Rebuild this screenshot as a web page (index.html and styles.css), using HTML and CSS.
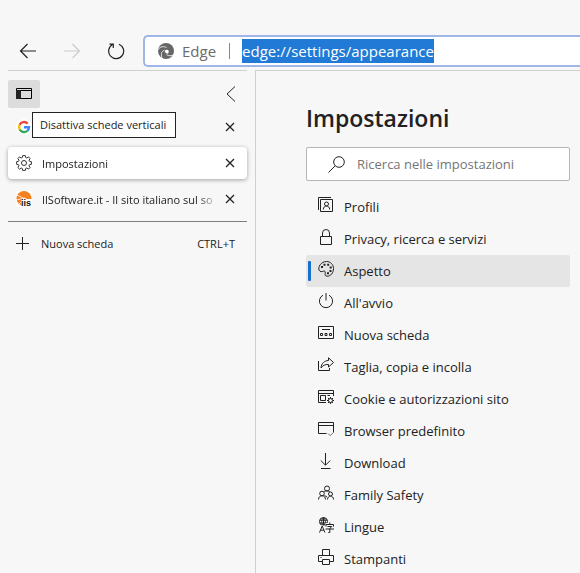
FILE: index.html
```
<!DOCTYPE html>
<html lang="it">
<head>
    <meta charset="utf-8">
    <title>Impostazioni</title>
    <link rel="stylesheet" href="styles.css">
</head>
<body>
    <header class="toolbar">
        <button class="nav-button" aria-label="Indietro">
            <svg viewBox="0 0 18 18"><path d="M17 9H1.500M8.500 2L1.500 9l7 7"/></svg>
        </button>
        <button class="nav-button disabled" aria-label="Avanti" disabled>
            <svg viewBox="0 0 18 18"><path d="M1 9h15.500M9.500 2l7 7-7 7"/></svg>
        </button>
        <button class="nav-button" aria-label="Aggiorna">
            <svg viewBox="0 0 18 18"><path d="M12 2.200a7.500 7.500 0 1 1-6.500.4M2.500 2.100h3.800v4"/></svg>
        </button>
        <div class="address-bar">
            <svg class="edge-logo" viewBox="0 0 16 16">
                <circle cx="8" cy="8" r="8"/>
                <path class="swirl" d="M0 7C2 3 6 3.200 8.500 4.500M4.500 16C2.500 12 3.200 8.500 6.500 7M16 11.500c-2.500 1.800-5.500 1.600-7.500.2"/>
                <path class="eye" d="M6.800 7.600C9 5.500 12 7.500 10.300 10c-1 1.600-3.700.2-3.500-2.400z"/>
            </svg>
            <label for="url">Edge</label>
            <span class="separator"></span>
            <input type="text" id="url" value="edge://settings/appearance" spellcheck="false">
        </div>
    </header>
    <div class="main">
        <aside class="sidebar">
            <div class="sidebar-top">
                <button class="toggle" aria-label="Disattiva schede verticali">
                    <svg viewBox="0 0 16 12"><path d="M.5.5h15v10H.5zM.5 2.500h15"/><path class="solid" d="M0 2h5v9H0z"/></svg>
                </button>
                <button class="collapse" aria-label="Comprimi riquadro">
                    <svg viewBox="0 0 10 16"><path d="M9 .5L1 8l8 7.500"/></svg>
                </button>
                <div class="tooltip" role="tooltip">Disattiva schede verticali</div>
            </div>
            <ul class="tabs">
                <li class="tab">
                    <svg class="favicon" viewBox="0 0 16 16">
                        <circle cx="8" cy="8" r="8" fill="#fff"/>
                        <g fill="none" stroke-width="2.400">
                            <path stroke="#ea4335" d="M3.600 5.700A5 5 0 0 1 11.600 4.600"/>
                            <path stroke="#fbbc05" d="M3.700 10.500a5 5 0 0 1-.1-4.800"/>
                            <path stroke="#34a853" d="M11.300 11.900a5 5 0 0 1-7.600-1.400"/>
                            <path stroke="#4285f4" d="M8 8.200h5a5 5 0 0 1-1.700 3.700"/>
                        </g>
                    </svg>
                    <span class="tab-title"></span>
                    <button class="close" aria-label="Chiudi scheda"><svg viewBox="0 0 10 10"><path d="M1 1l8 8M9 1L1 9"/></svg></button>
                </li>
                <li class="tab active">
                    <svg class="favicon line" viewBox="0 0 16 16">
                        <circle cx="8" cy="8" r="2.500"/>
                        <path d="M6.700.6h2.600l.4 1.900 1.100.5 1.700-1.100 1.600 1.700L13 5.200l.5 1.100 1.900.4v2.600l-1.900.4-.5 1.100 1.100 1.700-1.600 1.600-1.700-1.100-1.100.5-.4 1.900H6.700l-.4-1.900-1.100-.5-1.700 1.100-1.600-1.600L3 10.800l-.5-1.100-1.900-.4V6.700l1.900-.4L3 5.200 1.900 3.600l1.600-1.700L5.200 3l1.100-.5z"/>
                    </svg>
                    <span class="tab-title">Impostazioni</span>
                    <button class="close" aria-label="Chiudi scheda"><svg viewBox="0 0 10 10"><path d="M1 1l8 8M9 1L1 9"/></svg></button>
                </li>
                <li class="tab">
                    <svg class="favicon" viewBox="0 0 16 16">
                        <path fill="#fff" d="M0 0h16v16H0z"/>
                        <circle cx="8" cy="7.500" r="7.500" fill="#f5821f"/>
                        <path fill="#fff" d="M5.500 8L8 6.500 11 8h5v8H5z"/>
                        <path stroke="#fff" stroke-width=".8" fill="none" d="M1 4l6 3M0 9l6-1.500M2.500 13.500L7 9"/>
                        <text class="iis" x="5" y="15">iis</text>
                    </svg>
                    <span class="tab-title">IlSoftware.it - Il sito italiano sul so</span>
                    <button class="close" aria-label="Chiudi scheda"><svg viewBox="0 0 10 10"><path d="M1 1l8 8M9 1L1 9"/></svg></button>
                </li>
            </ul>
            <button class="new-tab">
                <svg viewBox="0 0 13 13"><path d="M6.500 0v13M0 6.500h13"/></svg>
                <span>Nuova scheda</span>
                <span class="shortcut">CTRL+T</span>
            </button>
        </aside>
        <main class="settings">
            <h1>Impostazioni</h1>
            <div class="search">
                <svg viewBox="0 0 17 17"><circle cx="11" cy="6" r="5.300"/><path d="M7.200 9.800L.5 16.500"/></svg>
                <input type="search" aria-label="Ricerca nelle impostazioni" placeholder="Ricerca nelle impostazioni">
            </div>
            <nav class="menu">
                <a href="#profili">
                    <svg viewBox="0 0 16 16"><path d="M2.500 2.500h12v12h-12zM.5 13V.5H13"/><circle cx="8.500" cy="7" r="2"/><path d="M5.300 12.500c0-4.600 6.400-4.600 6.400 0"/></svg>
                    Profili
                </a>
                <a href="#privacy">
                    <svg viewBox="0 0 16 16"><path d="M2.500 7.500h11v8h-11zM4.500 7.500V4a3.500 3.500 0 0 1 7 0v3.500"/></svg>
                    Privacy, ricerca e servizi
                </a>
                <a href="#aspetto" class="selected">
                    <svg viewBox="0 0 16 16"><path d="M8.500.5c4 0 7 3 7 7.200 0 4-2.800 7.500-6.200 7.500-2.300 0-2.500-1.500-2.100-3 .3-1.600-.4-2.600-1.700-2-1.600.8-3.500.6-4.400-1C-.3 6.200 3 .5 8.500.5z"/><path class="solid" d="M3 5h2v2H3zM5.500 2.700h2v2h-2zM9.200 2.800h2v2h-2zM11.700 5.500h2v2h-2zM11.500 9h2v2h-2zM9 11.300h2v2H9z"/></svg>
                    Aspetto
                </a>
                <a href="#avvio">
                    <svg viewBox="0 0 16 16"><path d="M5 2.200a6.600 6.600 0 1 0 6 0M8 0v7.500"/></svg>
                    All'avvio
                </a>
                <a href="#nuova-scheda">
                    <svg viewBox="0 0 16 16"><path d="M.5 1.500h15v12H.5zM4 4.500h8M2.500 8.500h2v2h-2zM7 8.500h2v2H7zM11.500 8.500h2v2h-2z"/></svg>
                    Nuova scheda
                </a>
                <a href="#taglia">
                    <svg viewBox="0 0 16 16"><path d="M.5 4v9.500h11V11M10.500.8l5 4.700-5 4.500V7.500C7 7.300 5 8.300 3 11c.5-4.800 3.300-7.200 7.500-7.500z"/></svg>
                    Taglia, copia e incolla
                </a>
                <a href="#cookie">
                    <svg viewBox="0 0 16 16"><path d="M8 13.500H.5v-12h15V7M.5 4.500h15M2.500 6.500h5v5h-5zM9.500 6.500H12"/><circle cx="12.500" cy="11.500" r="2"/><path d="M12.500 8v1.500M12.500 13.500V15M9 11.500h1.500M14.500 11.500H16M10 9l1.100 1.100M15 9l-1.100 1.100M10 14l1.100-1.100M15 14l-1.100-1.100"/></svg>
                    Cookie e autorizzazioni sito
                </a>
                <a href="#browser">
                    <svg viewBox="0 0 16 16"><path d="M8.500 12.500h-8v-11h15V11M.5 4.500h15"/><path stroke="#777" d="M10 12.500l2.200 2.200L16 11"/></svg>
                    Browser predefinito
                </a>
                <a href="#download">
                    <svg viewBox="0 0 16 16"><path d="M7.500 0v12M2.800 7.500l4.700 4.700 4.700-4.700M3 15.500h9.500"/></svg>
                    Download
                </a>
                <a href="#family">
                    <svg viewBox="0 0 16 16"><circle cx="9" cy="3.500" r="2.500"/><circle cx="4" cy="8.500" r="2.300"/><circle cx="12.500" cy="9" r="2"/><path d="M.5 14.500c0-5 7-5 7 0M9.500 14.500c0-4.500 6-4.500 6 0M5.700 7C6 6.300 7 6 8.500 6c1.800 0 2.800.3 3.500 1M6.500 10.500L9 12"/></svg>
                    Family Safety
                </a>
                <a href="#lingue">
                    <svg viewBox="0 0 16 16"><circle cx="5.500" cy="4.500" r="4"/><path d="M1.500 3.200h8M1.500 6h8M5.500.5v8M5.500.5c-2.500 2-2.500 6 0 8M5.500.5c2.500 2 2.500 6 0 8"/><path fill="#f7f7f7" stroke="none" d="M1 8.500h6.500v7H1zM7.500 6H16v10H7.500z"/><path d="M1.500 15.500l2.700-6.500 2.700 6.500M2.500 13.200h3.400M11.800 5.500v2M8 9.500v-2h7.500v2M9.500 9.500h4.300l-2 2v4h-1.500M7.500 12H16"/></svg>
                    Lingue
                </a>
                <a href="#stampanti">
                    <svg viewBox="0 0 16 16"><path d="M4.500 6.500v-6h7v6M4 12.500H.5v-6h15v6H12M4.500 10.500h7v5h-7zM2.500 8.500h1"/></svg>
                    Stampanti
                </a>
            </nav>
        </main>
    </div>
    <script src="script.js"></script>
</body>
</html>
```
FILE: styles.css
```
* {
    box-sizing: border-box;
}
html, body {
    height: 100%;
}
body {
    margin: 0;
    display: flex;
    flex-direction: column;
    overflow: hidden;
    background-color: #f7f7f7;
    color: #222;
    font-family: "Segoe UI", "Open Sans", sans-serif;
    font-size: 13px;
}
button {
    padding: 0;
    border: none;
    background: none;
    color: inherit;
    font: inherit;
}
svg {
    flex: none;
    fill: none;
    stroke: #222;
}
.solid {
    fill: #222;
    stroke: none;
}

/* toolbar */
.toolbar {
    display: flex;
    align-items: center;
    gap: 12px;
    padding: 35px 0 3px 12px;
}
.nav-button {
    width: 32px;
    height: 32px;
}
.nav-button svg {
    display: block;
    width: 18px;
    height: 18px;
    margin: auto;
    stroke-width: 1.2;
}
.nav-button.disabled svg {
    stroke: #ccc;
}
.address-bar {
    flex: 1;
    display: flex;
    align-items: center;
    height: 32px;
    margin-left: -1px;
    padding-left: 13px;
    border: 2px solid #a0b6e8;
    border-right: none;
    border-radius: 5px 0 0 5px;
    background-color: #fff;
    color: #6b6b6b;
    font-size: 15px;
}
.edge-logo {
    width: 16px;
    height: 16px;
    margin-right: 8px;
    fill: #666;
    stroke: none;
}
.swirl {
    fill: none;
    stroke: #fff;
    stroke-width: 0.8;
}
.eye {
    fill: #fff;
}
.separator {
    width: 1px;
    height: 16px;
    margin: 0 12px 0 13px;
    background-color: #888;
}
.address-bar input {
    flex: 1;
    min-width: 0;
    height: 24px;
    padding: 0;
    border: none;
    outline: none;
    background: none;
    color: #222;
    font: 15px/24px "Segoe UI", "Open Sans", sans-serif;
}
.address-bar input::selection {
    background-color: rgba(30, 120, 212, 0.99);
    color: #fff;
}

.main {
    flex: 1;
    display: flex;
    min-height: 0;
}

/* vertical tabs */
.sidebar {
    flex: none;
    width: 239px;
    margin: 0 8px;
    border-top: 1px solid #d0d0d0;
    font-size: 11px;
}
.sidebar-top {
    position: relative;
    display: flex;
    align-items: center;
    justify-content: space-between;
    padding: 9px 11px 3px 0;
}
.toggle {
    width: 32px;
    height: 28px;
    border-radius: 2px;
    background-color: #dcdcdc;
}
.toggle svg {
    display: block;
    width: 16px;
    height: 12px;
    margin: auto;
    stroke: #000;
}
.collapse svg {
    display: block;
    width: 10px;
    height: 16px;
}
.tooltip {
    position: absolute;
    top: 41px;
    left: 24px;
    padding: 0 9px 0 7px;
    border: 1px solid #222;
    background-color: #fff;
    line-height: 24px;
    white-space: nowrap;
}
.tabs {
    display: flex;
    flex-direction: column;
    gap: 4px;
    margin: 0;
    padding: 0 0 6px;
    border-bottom: 1px solid #808080;
    list-style: none;
}
.tab {
    display: flex;
    align-items: center;
    gap: 10px;
    height: 32px;
    padding: 0 12px 0 8px;
    border-radius: 4px;
}
.tab.active {
    background-color: #fff;
    box-shadow: 0 1px 4px rgba(0, 0, 0, 0.35);
}
.favicon {
    width: 16px;
    height: 16px;
    stroke: none;
}
.favicon.line {
    stroke: #333;
}
.iis {
    fill: #111;
    font: bold 9px "Liberation Sans", sans-serif;
}
.tab-title {
    flex: 1;
    margin-right: -4px;
    overflow: hidden;
    white-space: nowrap;
    mask-image: linear-gradient(to right, #000 88%, transparent);
}
.close svg {
    display: block;
    width: 10px;
    height: 10px;
    stroke-width: 1.3;
}
.new-tab {
    display: flex;
    align-items: center;
    gap: 12px;
    width: 100%;
    height: 42px;
    padding: 0 12px 0 8px;
}
.new-tab svg {
    width: 13px;
    height: 13px;
}
.shortcut {
    margin-left: auto;
}

/* settings */
.settings {
    flex: 1;
    min-width: 0;
    padding: 30px 10px 0 50px;
    border-top: 1px solid #d0d0d0;
    border-left: 1px solid #d0d0d0;
}
h1 {
    margin: 0 0 12px;
    font-size: 23px;
    font-weight: 600;
    line-height: 34px;
}
.search {
    display: flex;
    align-items: center;
    gap: 12px;
    height: 34px;
    margin-bottom: 10px;
    padding: 0 10px 0 21px;
    border: 1px solid #b5b5b5;
    border-radius: 2px;
    background-color: #fff;
}
.search svg {
    width: 17px;
    height: 17px;
}
.search input {
    flex: 1;
    min-width: 0;
    padding: 0;
    border: none;
    outline: none;
    background: none;
    font: inherit;
}
.search input::placeholder {
    color: #757575;
}
.menu a {
    position: relative;
    display: flex;
    align-items: center;
    gap: 10px;
    height: 32px;
    padding-left: 12px;
    border-radius: 2px;
    color: #222;
    text-decoration: none;
}
.menu svg {
    width: 16px;
    height: 16px;
    margin-bottom: 4px;
}
.menu .selected {
    background-color: #e5e5e5;
}
.menu .selected::before {
    content: "";
    position: absolute;
    top: 6px;
    left: 2px;
    width: 3px;
    height: 20px;
    border-radius: 1px;
    background-color: #1a6fca;
}
```
FILE: script.js
```
const url = document.getElementById('url');
url.focus();
url.select();
```
